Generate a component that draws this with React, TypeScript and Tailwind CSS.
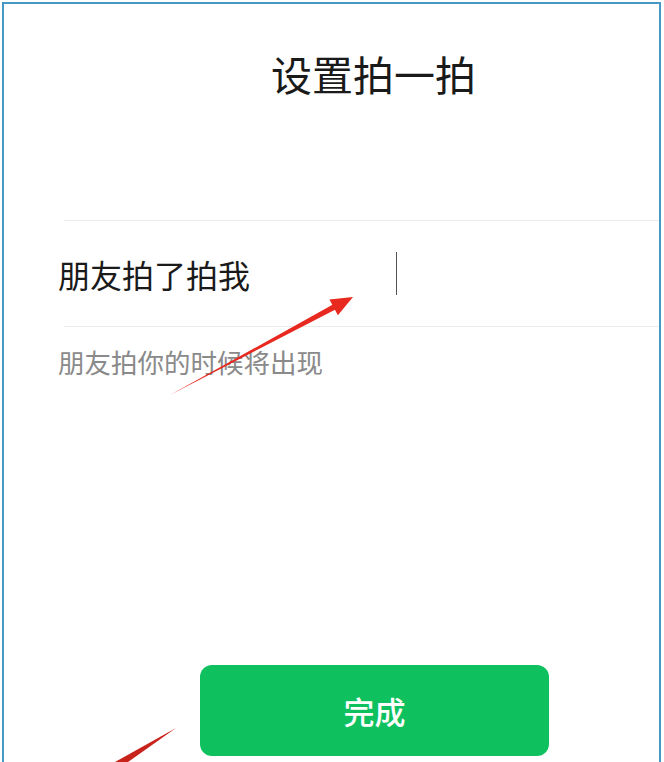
import React from 'react';

const cjk = { fontFamily: '"Noto Sans CJK SC", "Noto Sans", sans-serif' };

// 红色标注箭头，覆盖在页面之上
function Arrows() {
  return (
    <svg className="absolute inset-0 pointer-events-none" width="664" height="762" viewBox="0 0 664 762">
      {/* 指向输入框的箭头 */}
      <polygon points="170,395 338.4,307.9 335.6,303.1" fill="#e8291f" />
      <polygon points="353,297 329.4,299.5 337.9,315.3" fill="#e8291f" />
      {/* 指向完成按钮的箭头尾部 */}
      <polygon points="176,728 121,767 115,762" fill="#c8231b" />
    </svg>
  );
}

export default function App() {
  return (
    <div className="relative w-[664px] h-[762px] bg-white overflow-hidden" style={cjk}>
      <div className="ml-[2px] mt-[2px] w-[659px] h-[762px] border-l-[2.5px] border-t-[2.5px] border-r-[2.5px] border-[#4798c4]">
        {/* 标题 */}
        <div className="h-[216px] pt-[49px] pl-[267px]">
          <h1 className="text-[41px] leading-none text-[#1a1a1a]">设置拍一拍</h1>
        </div>

        <div className="ml-[60px] h-px bg-[#ececec]" />

        {/* 输入行 */}
        <div className="h-[105px] flex items-center pl-[54px]">
          <span className="w-[338px] text-[32px] leading-none text-[#1a1a1a]">朋友拍了拍我</span>
          <div className="w-px h-[43px] bg-[#555555]" />
        </div>

        <div className="ml-[60px] h-px bg-[#ececec]" />

        {/* 说明文字 */}
        <p className="pt-[22px] pl-[54px] text-[26.5px] leading-none text-[#8a8a8a]">朋友拍你的时候将出现</p>

        {/* 完成按钮 */}
        <button className="mt-[289px] ml-[196px] w-[349px] h-[91px] rounded-[12px] bg-[#0ec15e] flex items-center justify-center">
          <span className="text-[31px] leading-none text-white font-medium">完成</span>
        </button>
      </div>
      <Arrows />
    </div>
  );
}
